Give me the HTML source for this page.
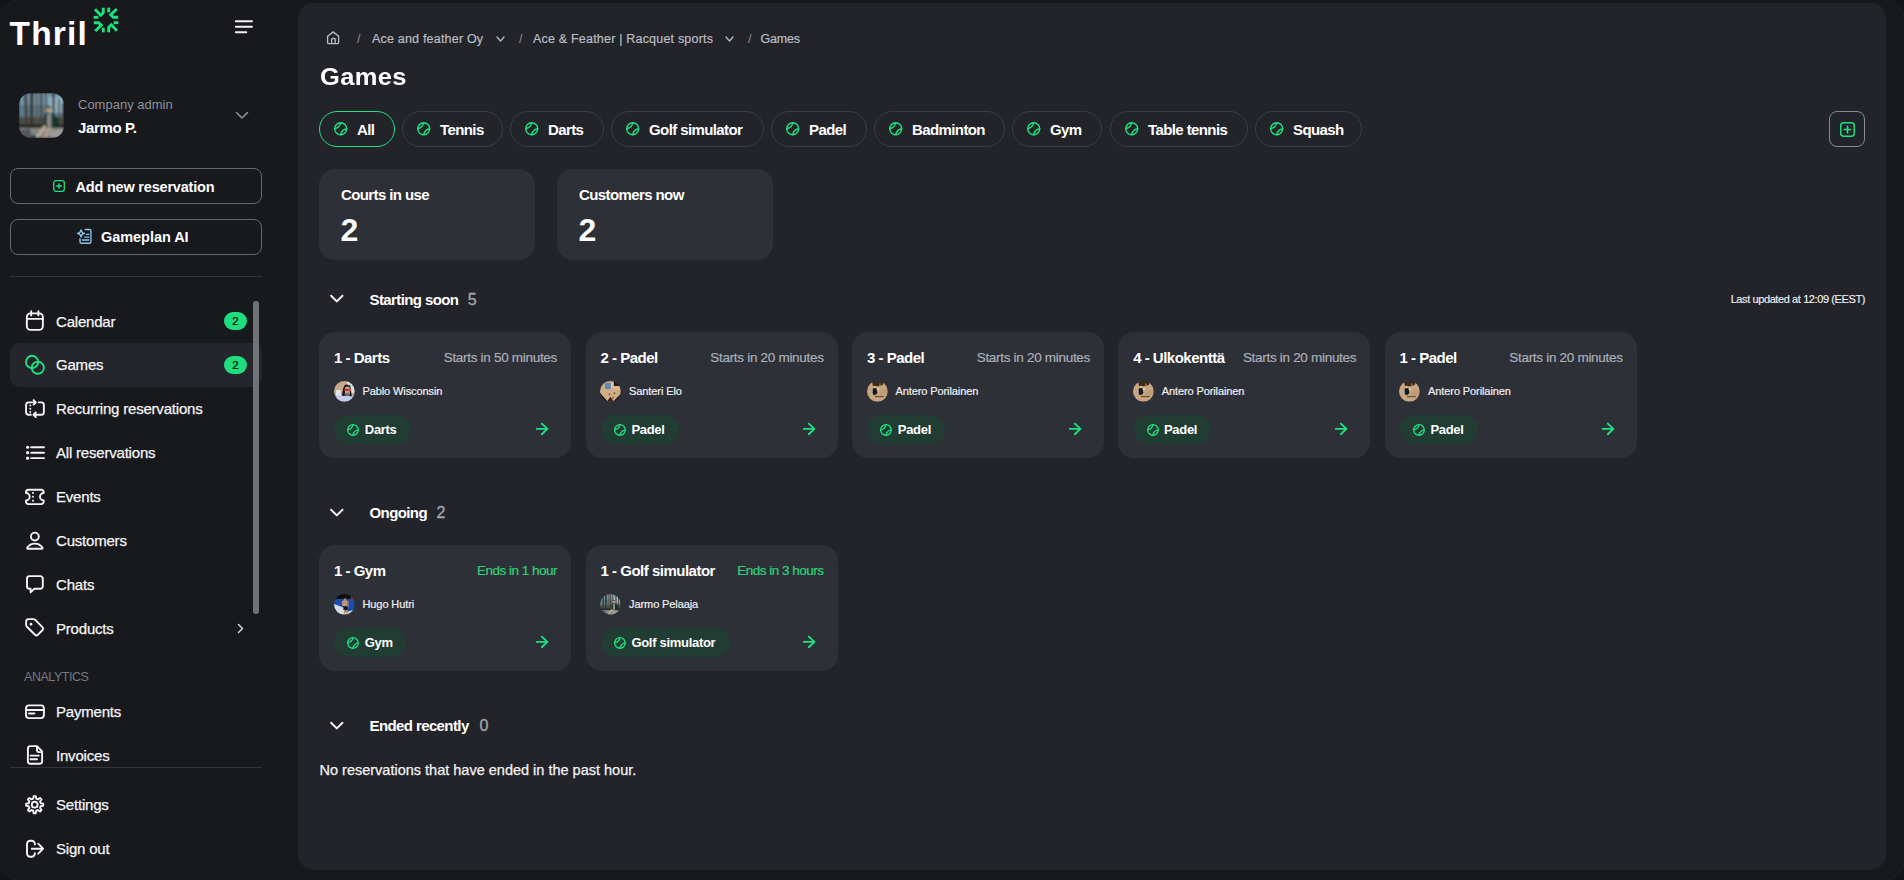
<!DOCTYPE html>
<html><head><meta charset="utf-8">
<style>
*{box-sizing:border-box;margin:0;padding:0}
html,body{width:1904px;height:880px;overflow:hidden;background:#18191d;font-family:"Liberation Sans",sans-serif;color:#fff}
.a{position:absolute}
.t{position:absolute;line-height:1;white-space:nowrap}
svg{position:absolute;overflow:visible}
.nav{font-size:15px;color:#f4f4f5;letter-spacing:-0.2px;-webkit-text-stroke:0.25px #f4f4f5}
.ic{fill:none;stroke:#f2f2f3;stroke-width:1.6;stroke-linecap:round;stroke-linejoin:round}
.g{stroke:#1de27f}
#main{position:absolute;left:298px;top:3px;width:1588px;height:867px;border-radius:16px;background:#232429}
.chip{position:absolute;top:111px;height:36px;border:1px solid #3b3d43;border-radius:18px}
.chip span{position:absolute;left:0;top:0;line-height:1;font-size:15px;font-weight:bold;white-space:nowrap}
.stat{position:absolute;top:169px;width:216px;height:91px;border-radius:16px;background:#2d2f36}
.card{position:absolute;width:252px;height:126px;border-radius:16px;background:#2d2f36}
.tag{position:absolute;left:15px;top:83px;height:29px;border-radius:15px;background:#1d3a2b}
</style></head><body>

<!-- logo -->
<div class="t" style="left:9.5px;top:17.3px;font-size:33.5px;font-weight:bold;letter-spacing:1.2px">Thril</div>
<svg style="left:89.8px;top:4.45px" width="32" height="32" viewBox="0 0 32 32">
 <g fill="none" stroke="#1de27f" stroke-width="2.9" stroke-linejoin="miter">
  <g id="lq"><path d="M5 5.2 L10.73 11.22 L13.27 8.68 L13.27 3.82"/><path d="M18.73 3.64 L18.73 8.36"/></g>
  <use href="#lq" transform="rotate(90 16 16)"/>
  <use href="#lq" transform="rotate(180 16 16)"/>
  <use href="#lq" transform="rotate(270 16 16)"/>
 </g>
</svg>
<!-- hamburger -->
<svg style="left:234px;top:19px" width="20" height="16" viewBox="0 0 20 16">
 <g stroke="#f2f2f3" stroke-width="1.9" stroke-linecap="round"><path d="M1.8 2.3H18M1.8 7.8H18M1.8 13.3H12.3"/></g>
</svg>

<!-- user -->
<svg style="left:19px;top:92.8px" width="45" height="45" viewBox="0 0 45 45"><defs><clipPath id="cp1"><rect width="45" height="45" rx="12"/></clipPath><filter id="bl1" x="-10%" y="-10%" width="120%" height="120%"><feGaussianBlur stdDeviation="0.8"/></filter></defs><g clip-path="url(#cp1)"><g filter="url(#bl1)"><rect width="45" height="45" fill="#587d8e"/>
<rect x="0" y="0" width="45" height="12" fill="#6d95a8"/><rect x="30" y="4" width="15" height="16" fill="#8fb4c6"/>
<rect x="0" y="24" width="45" height="9" fill="#46504c"/>
<path d="M5 0 H8 L9 33 H6Z" fill="#4a3d34"/><path d="M11 0 H14.5 L14 33 H11Z" fill="#3d322b"/><rect x="17" y="0" width="1.5" height="30" fill="#5b4c42"/>
<rect x="21" y="0" width="2.2" height="30" fill="#463a32"/><rect x="26" y="0" width="1.5" height="26" fill="#5d4e44"/>
<path d="M33 0 H35.5 L36 30 H34Z" fill="#473a31"/><rect x="39" y="6" width="1.8" height="26" fill="#52443a"/><rect x="43" y="10" width="2" height="22" fill="#4a3d34"/>
<rect x="0" y="31" width="45" height="4" fill="#2c2b26"/>
<path d="M0 35 H45 V45 H0Z" fill="#858684"/><path d="M0 37 L11 35.5 L13 45 H0Z" fill="#50585a"/><path d="M30 38 L45 36 V45 H32Z" fill="#9a9b98"/>
<circle cx="29.5" cy="16.5" r="2.6" fill="#b99a7d"/><rect x="27" y="13.2" width="5" height="2" fill="#5e4436"/>
<path d="M25 21 L33 20 L40 26 L39 34 L26 34Z" fill="#17302c"/>
<rect x="28" y="21" width="4.5" height="12" fill="#878988"/>
<path d="M25 32 L16 44 L19 45 L28 34Z" fill="#bba794"/><path d="M30 33 L24 45 L27 45 L33 34Z" fill="#b39f8b"/>
<rect x="12" y="42" width="5" height="3" fill="#2b4a60"/></g></g></svg>
<div class="t" style="left:78px;top:98px;font-size:13px;color:#8b9099">Company admin</div>
<div class="t" style="left:78px;top:120.3px;font-size:15px;font-weight:bold;letter-spacing:-0.35px">Jarmo P.</div>
<svg style="left:234.7px;top:110.7px" width="14" height="9" viewBox="0 0 14 9"><path d="M1.5 1.5L7 7L12.5 1.5" fill="none" stroke="#8b9099" stroke-width="1.6" stroke-linecap="round" stroke-linejoin="round"/></svg>

<!-- buttons -->
<div class="a" style="left:10px;top:168px;width:252px;height:36px;border:1px solid #64676e;border-radius:8px"></div>
<svg style="left:53px;top:180px" width="12" height="12" viewBox="0 0 12 12"><rect x="0.7" y="0.7" width="10.6" height="10.6" rx="2.2" fill="none" stroke="#1de27f" stroke-width="1.3"/><path d="M6 3.6V8.4M3.6 6H8.4" stroke="#1de27f" stroke-width="1.3" stroke-linecap="round"/></svg>
<div class="t" style="left:75.5px;top:179.8px;font-size:14.5px;font-weight:bold;letter-spacing:-0.2px">Add new reservation</div>

<div class="a" style="left:10px;top:219px;width:252px;height:36px;border:1px solid #64676e;border-radius:8px"></div>
<svg style="left:77px;top:228px" width="16" height="17" viewBox="0 0 16 17"><g fill="none" stroke="#8cc4ea" stroke-width="1.35" stroke-linecap="round" stroke-linejoin="round"><path d="M8.3 1.5H12.4A1.5 1.5 0 0 1 13.9 3V13.7A1.5 1.5 0 0 1 12.4 15.2H4.5A1.5 1.5 0 0 1 3 13.7V10.6"/><path d="M9.6 6.3H11.8M7.8 9.1H11.8M5.2 12H11.8"/><path d="M4 1.9Q4.4 5 7.5 5.45Q4.4 5.9 4 9Q3.6 5.9 0.5 5.45Q3.6 5 4 1.9Z"/></g></svg>
<div class="t" style="left:101px;top:229.8px;font-size:14.5px;font-weight:bold;letter-spacing:-0.05px">Gameplan AI</div>

<div class="a" style="left:10px;top:276px;width:252px;height:1px;background:#34363c"></div>

<!-- nav -->
<div class="a" style="left:10px;top:343px;width:252px;height:44px;border-radius:10px;background:#25262b"></div>
<div class="a" style="left:253.2px;top:301px;width:5.6px;height:313px;border-radius:3px;background:rgba(128,130,134,0.85)"></div>

<div class="t nav" style="left:56px;top:314px">Calendar</div>
<div class="t nav" style="left:56px;top:357.4px">Games</div>
<div class="t nav" style="left:56px;top:401px">Recurring reservations</div>
<div class="t nav" style="left:56px;top:445px">All reservations</div>
<div class="t nav" style="left:56px;top:488.7px">Events</div>
<div class="t nav" style="left:56px;top:533.1px">Customers</div>
<div class="t nav" style="left:56px;top:577.3px">Chats</div>
<div class="t nav" style="left:56px;top:620.9px">Products</div>
<div class="t" style="left:24px;top:670.9px;font-size:12.5px;color:#737a88;letter-spacing:-0.45px">ANALYTICS</div>
<div class="t nav" style="left:56px;top:703.6px">Payments</div>
<div class="t nav" style="left:56px;top:747.9px">Invoices</div>
<div class="a" style="left:10px;top:767px;width:252px;height:1px;background:#34363c"></div>
<div class="t nav" style="left:56px;top:797.4px">Settings</div>
<div class="t nav" style="left:56px;top:841.1px">Sign out</div>

<div class="a" style="left:224px;top:312px;width:23px;height:18px;border-radius:9px;background:#1ddd7e;color:#000;font-size:11.5px;line-height:18.5px;text-align:center;-webkit-text-stroke:0.2px #000">2</div>
<div class="a" style="left:224px;top:356px;width:23px;height:18px;border-radius:9px;background:#1ddd7e;color:#000;font-size:11.5px;line-height:18.5px;text-align:center;-webkit-text-stroke:0.2px #000">2</div>

<svg style="left:0;top:0" width="300" height="880" viewBox="0 0 300 880">
<g fill="none" stroke="#f4f4f5" stroke-width="1.9" stroke-linecap="round" stroke-linejoin="round">
 <rect x="26.85" y="313.4" width="16" height="16.5" rx="3.7"/><path d="M26.85 318.9H42.85M31.2 311.2V315.4M38.4 311.2V315.4"/>
 <g stroke="#1de27f"><circle cx="32.05" cy="361.9" r="6.1"/><circle cx="37.8" cy="367.7" r="6.1"/></g>
 <path d="M30.9 414.76H28.6A2.5 2.5 0 0 1 26.1 412.26V404.85A2.5 2.5 0 0 1 28.6 402.35H35.8M33.6 400.1L35.9 402.35L33.6 404.6"/>
 <path d="M38.8 402.35H41.36A2.5 2.5 0 0 1 43.86 404.85V412.26A2.5 2.5 0 0 1 41.36 414.76H33.8M35.8 412.5L33.5 414.76L35.8 417"/>
 <path d="M31.16 447.24H44M31.16 452.7H44M31.16 458.17H44"/>
 <path d="M28.5 489.76H41.2A2.5 2.5 0 0 1 43.7 492.26V493A3.7 3.7 0 0 0 43.7 500.4V501.6A2.5 2.5 0 0 1 41.2 504.1H28.5A2.5 2.5 0 0 1 26 501.6V500.4A3.7 3.7 0 0 0 26 493V492.26A2.5 2.5 0 0 1 28.5 489.76Z"/>
 <circle cx="34.85" cy="536.6" r="3.95"/>
 <path d="M27.9 548.7H41.8Q42.9 548.7 42.4 547.6Q39.8 543.65 34.85 543.65Q29.9 543.65 27.3 547.6Q26.8 548.7 27.9 548.7Z"/>
 <path d="M29.5 576.1H40.3A2.5 2.5 0 0 1 42.8 578.6V586.3A2.5 2.5 0 0 1 40.3 588.8H34.4L30.6 592.3V588.8H29.5A2.5 2.5 0 0 1 27 586.3V578.6A2.5 2.5 0 0 1 29.5 576.1Z"/>
 <path d="M26.14 621.6A2.5 2.5 0 0 1 28.64 619.14H33.6Q34.4 619.14 35 619.7L42.6 627.3A2 2 0 0 1 42.6 630L37.8 634.8A2 2 0 0 1 35 634.8L26.7 626.5Q26.14 625.9 26.14 625.1Z"/>
 <path d="M238.5 624.5L242.5 628.5L238.5 632.5" stroke="#d8d9dc" stroke-width="1.5"/>
 <rect x="26" y="705.4" width="17.9" height="12.7" rx="3"/><path d="M26 710H43.9M28.94 713.5H34.4"/>
 <path d="M30.4 746.14H37L42.1 751.3V761.2A2.5 2.5 0 0 1 39.6 763.7H30.4A2.5 2.5 0 0 1 27.9 761.2V748.64A2.5 2.5 0 0 1 30.4 746.14Z"/><path d="M37 746.6V750.6A1.5 1.5 0 0 0 38.5 752.1H41.8M30.57 755.6H38.8M30.57 759.3H37"/>
 <path d="M33.21 798.68 L33.62 796.17 L35.78 796.17 L36.19 798.68 L37.90 799.39 L39.97 797.90 L41.50 799.43 L40.01 801.50 L40.72 803.21 L43.23 803.62 L43.23 805.78 L40.72 806.19 L40.01 807.90 L41.50 809.97 L39.97 811.50 L37.90 810.01 L36.19 810.72 L35.78 813.23 L33.62 813.23 L33.21 810.72 L31.50 810.01 L29.43 811.50 L27.90 809.97 L29.39 807.90 L28.68 806.19 L26.17 805.78 L26.17 803.62 L28.68 803.21 L29.39 801.50 L27.90 799.43 L29.43 797.90 L31.50 799.39Z"/><circle cx="34.7" cy="804.7" r="2.9"/>
 <path d="M34.85 844.4V843.9A3.2 3.2 0 0 0 31.65 840.7H30.2A3.2 3.2 0 0 0 27 843.9V853.5A3.2 3.2 0 0 0 30.2 856.7H31.65A3.2 3.2 0 0 0 34.85 853.5V853.1M31.75 848.7H43M38.25 843.7L43.1 848.7L38.25 853.7"/>
</g>
<g fill="#f4f4f5"><circle cx="30.3" cy="405.5" r="0.95"/><circle cx="30.3" cy="408.8" r="0.95"/><circle cx="30.3" cy="412" r="0.95"/>
<circle cx="27.6" cy="447.24" r="1.6"/><circle cx="27.6" cy="452.7" r="1.6"/><circle cx="27.6" cy="458.17" r="1.6"/>
<rect x="32.1" y="492" width="1.7" height="1.8"/><rect x="32.1" y="495.8" width="1.7" height="1.8"/><rect x="32.1" y="499.8" width="1.7" height="1.8"/>
<circle cx="31" cy="624.16" r="1.3"/></g>
</svg>
<!-- MAIN -->
<div id="main"></div>
<svg style="left:326px;top:31px" width="14" height="14" viewBox="0 0 14 14"><g fill="none" stroke="#b9bdc5" stroke-width="1.35" stroke-linejoin="round"><path d="M1.6 5.2L7.25 0.9L12.6 5.2V11.6A1 1 0 0 1 11.6 12.6H2.6A1 1 0 0 1 1.6 11.6Z"/><path d="M5.6 12.6V8.4A0.9 0.9 0 0 1 6.5 7.5H8.35A0.9 0.9 0 0 1 9.25 8.4V12.6"/></g></svg>
<div class="t" style="left:357px;top:33.22px;font-size:12.5px;color:#8d9199">/</div>
<div class="t" style="left:372px;top:33.22px;font-size:12.5px;color:#b9bdc5;letter-spacing:0.2px;-webkit-text-stroke:0.2px #b9bdc5">Ace and feather Oy</div>
<svg style="left:496px;top:35.5px" width="9" height="6" viewBox="0 0 9 6"><path d="M1 1L4.5 5L8 1" fill="none" stroke="#b4b8bf" stroke-width="1.4" stroke-linecap="round" stroke-linejoin="round"/></svg>
<div class="t" style="left:519px;top:33.22px;font-size:12.5px;color:#8d9199">/</div>
<div class="t" style="left:533px;top:33.22px;font-size:12.5px;color:#b9bdc5;letter-spacing:0.2px;-webkit-text-stroke:0.2px #b9bdc5">Ace &amp; Feather | Racquet sports</div>
<svg style="left:724.5px;top:35.5px" width="9" height="6" viewBox="0 0 9 6"><path d="M1 1L4.5 5L8 1" fill="none" stroke="#b4b8bf" stroke-width="1.4" stroke-linecap="round" stroke-linejoin="round"/></svg>
<div class="t" style="left:748px;top:33.22px;font-size:12.5px;color:#8d9199">/</div>
<div class="t" style="left:760.5px;top:33.22px;font-size:12.5px;color:#b9bdc5;letter-spacing:0.2px;-webkit-text-stroke:0.2px #b9bdc5;letter-spacing:-0.2px">Games</div>
<div class="t" style="left:319.5px;top:66.11px;font-size:23.5px;font-weight:bold;letter-spacing:0.3px;transform:scaleX(1.085);transform-origin:0 0">Games</div>
<div class="a" style="left:319px;top:111px;width:76px;height:36px;border:1.5px solid #1de27f;border-radius:18px"></div>
<svg style="left:332.90px;top:121.45px" width="15.40" height="15.40" viewBox="0 0 15.40 15.40"><g fill="none" stroke="#1de27f" stroke-width="1.4" stroke-linecap="round"><circle cx="7.70" cy="7.70" r="6.0"/><path d="M7.70 1.70A7.50 7.50 0 0 1 1.70 7.70"/><path d="M13.70 7.70A7.50 7.50 0 0 0 7.70 13.70"/></g></svg>
<div class="t" style="left:357px;top:121.80px;font-size:15px;font-weight:bold;letter-spacing:-0.6px">All</div>
<div class="a" style="left:402px;top:111px;width:101px;height:36px;border:1px solid #3a3d45;border-radius:18px"></div>
<svg style="left:415.90px;top:121.45px" width="15.40" height="15.40" viewBox="0 0 15.40 15.40"><g fill="none" stroke="#1de27f" stroke-width="1.4" stroke-linecap="round"><circle cx="7.70" cy="7.70" r="6.0"/><path d="M7.70 1.70A7.50 7.50 0 0 1 1.70 7.70"/><path d="M13.70 7.70A7.50 7.50 0 0 0 7.70 13.70"/></g></svg>
<div class="t" style="left:440px;top:121.80px;font-size:15px;font-weight:bold;letter-spacing:-0.6px">Tennis</div>
<div class="a" style="left:510px;top:111px;width:94px;height:36px;border:1px solid #3a3d45;border-radius:18px"></div>
<svg style="left:523.90px;top:121.45px" width="15.40" height="15.40" viewBox="0 0 15.40 15.40"><g fill="none" stroke="#1de27f" stroke-width="1.4" stroke-linecap="round"><circle cx="7.70" cy="7.70" r="6.0"/><path d="M7.70 1.70A7.50 7.50 0 0 1 1.70 7.70"/><path d="M13.70 7.70A7.50 7.50 0 0 0 7.70 13.70"/></g></svg>
<div class="t" style="left:548px;top:121.80px;font-size:15px;font-weight:bold;letter-spacing:-0.6px">Darts</div>
<div class="a" style="left:611px;top:111px;width:153px;height:36px;border:1px solid #3a3d45;border-radius:18px"></div>
<svg style="left:624.90px;top:121.45px" width="15.40" height="15.40" viewBox="0 0 15.40 15.40"><g fill="none" stroke="#1de27f" stroke-width="1.4" stroke-linecap="round"><circle cx="7.70" cy="7.70" r="6.0"/><path d="M7.70 1.70A7.50 7.50 0 0 1 1.70 7.70"/><path d="M13.70 7.70A7.50 7.50 0 0 0 7.70 13.70"/></g></svg>
<div class="t" style="left:649px;top:121.80px;font-size:15px;font-weight:bold;letter-spacing:-0.6px">Golf simulator</div>
<div class="a" style="left:771px;top:111px;width:96px;height:36px;border:1px solid #3a3d45;border-radius:18px"></div>
<svg style="left:784.90px;top:121.45px" width="15.40" height="15.40" viewBox="0 0 15.40 15.40"><g fill="none" stroke="#1de27f" stroke-width="1.4" stroke-linecap="round"><circle cx="7.70" cy="7.70" r="6.0"/><path d="M7.70 1.70A7.50 7.50 0 0 1 1.70 7.70"/><path d="M13.70 7.70A7.50 7.50 0 0 0 7.70 13.70"/></g></svg>
<div class="t" style="left:809px;top:121.80px;font-size:15px;font-weight:bold;letter-spacing:-0.6px">Padel</div>
<div class="a" style="left:874px;top:111px;width:131px;height:36px;border:1px solid #3a3d45;border-radius:18px"></div>
<svg style="left:887.90px;top:121.45px" width="15.40" height="15.40" viewBox="0 0 15.40 15.40"><g fill="none" stroke="#1de27f" stroke-width="1.4" stroke-linecap="round"><circle cx="7.70" cy="7.70" r="6.0"/><path d="M7.70 1.70A7.50 7.50 0 0 1 1.70 7.70"/><path d="M13.70 7.70A7.50 7.50 0 0 0 7.70 13.70"/></g></svg>
<div class="t" style="left:912px;top:121.80px;font-size:15px;font-weight:bold;letter-spacing:-0.6px">Badminton</div>
<div class="a" style="left:1012px;top:111px;width:90px;height:36px;border:1px solid #3a3d45;border-radius:18px"></div>
<svg style="left:1025.90px;top:121.45px" width="15.40" height="15.40" viewBox="0 0 15.40 15.40"><g fill="none" stroke="#1de27f" stroke-width="1.4" stroke-linecap="round"><circle cx="7.70" cy="7.70" r="6.0"/><path d="M7.70 1.70A7.50 7.50 0 0 1 1.70 7.70"/><path d="M13.70 7.70A7.50 7.50 0 0 0 7.70 13.70"/></g></svg>
<div class="t" style="left:1050px;top:121.80px;font-size:15px;font-weight:bold;letter-spacing:-0.6px">Gym</div>
<div class="a" style="left:1110px;top:111px;width:138px;height:36px;border:1px solid #3a3d45;border-radius:18px"></div>
<svg style="left:1123.90px;top:121.45px" width="15.40" height="15.40" viewBox="0 0 15.40 15.40"><g fill="none" stroke="#1de27f" stroke-width="1.4" stroke-linecap="round"><circle cx="7.70" cy="7.70" r="6.0"/><path d="M7.70 1.70A7.50 7.50 0 0 1 1.70 7.70"/><path d="M13.70 7.70A7.50 7.50 0 0 0 7.70 13.70"/></g></svg>
<div class="t" style="left:1148px;top:121.80px;font-size:15px;font-weight:bold;letter-spacing:-0.6px">Table tennis</div>
<div class="a" style="left:1255px;top:111px;width:107px;height:36px;border:1px solid #3a3d45;border-radius:18px"></div>
<svg style="left:1268.90px;top:121.45px" width="15.40" height="15.40" viewBox="0 0 15.40 15.40"><g fill="none" stroke="#1de27f" stroke-width="1.4" stroke-linecap="round"><circle cx="7.70" cy="7.70" r="6.0"/><path d="M7.70 1.70A7.50 7.50 0 0 1 1.70 7.70"/><path d="M13.70 7.70A7.50 7.50 0 0 0 7.70 13.70"/></g></svg>
<div class="t" style="left:1293px;top:121.80px;font-size:15px;font-weight:bold;letter-spacing:-0.6px">Squash</div>
<div class="a" style="left:1829px;top:111px;width:36px;height:36px;border:1px solid #858a93;border-radius:8px"></div>
<svg style="left:1839.5px;top:121.5px" width="15" height="15" viewBox="0 0 15 15"><rect x="0.75" y="0.75" width="13.5" height="13.5" rx="3" fill="none" stroke="#1de27f" stroke-width="1.45"/><path d="M7.5 4.3V10.7M4.3 7.5H10.7" stroke="#1de27f" stroke-width="1.7" stroke-linecap="round"/></svg>
<div class="a" style="left:319px;top:169px;width:216px;height:91px;border-radius:16px;background:#2e3038"></div>
<div class="t" style="left:341px;top:186.90px;font-size:15px;font-weight:bold;letter-spacing:-0.6px">Courts in use</div>
<div class="t" style="left:340.5px;top:213.91px;font-size:32px;font-weight:bold">2</div>
<div class="a" style="left:557px;top:169px;width:216px;height:91px;border-radius:16px;background:#2e3038"></div>
<div class="t" style="left:579px;top:186.90px;font-size:15px;font-weight:bold;letter-spacing:-0.6px">Customers now</div>
<div class="t" style="left:578.5px;top:213.91px;font-size:32px;font-weight:bold">2</div>
<svg style="left:325px;top:288px" width="24" height="16" viewBox="0 0 24 16"><path d="M6.1 7.7L11.8 13.4L17.5 7.7" fill="none" stroke="#f2f2f3" stroke-width="2" stroke-linecap="round" stroke-linejoin="round"/></svg>
<div class="t" style="left:369.5px;top:291.80px;font-size:15px;font-weight:bold;letter-spacing:-0.6px">Starting soon</div>
<div class="t" style="left:467.8px;top:291.86px;font-size:16px;color:#a3a7ae;-webkit-text-stroke:0.3px #a3a7ae">5</div>
<div class="t" style="right:39px;top:293.69px;font-size:11px;letter-spacing:-0.4px;color:#f0f0f2;-webkit-text-stroke:0.15px #f0f0f2">Last updated at 12:09 (EEST)</div>
<svg style="left:325px;top:501.5px" width="24" height="16" viewBox="0 0 24 16"><path d="M6.1 7.7L11.8 13.4L17.5 7.7" fill="none" stroke="#f2f2f3" stroke-width="2" stroke-linecap="round" stroke-linejoin="round"/></svg>
<div class="t" style="left:369.5px;top:505.00px;font-size:15px;font-weight:bold;letter-spacing:-0.6px">Ongoing</div>
<div class="t" style="left:436.6px;top:505.06px;font-size:16px;color:#a3a7ae;-webkit-text-stroke:0.3px #a3a7ae">2</div>
<svg style="left:325px;top:715.3px" width="24" height="16" viewBox="0 0 24 16"><path d="M6.1 7.7L11.8 13.4L17.5 7.7" fill="none" stroke="#f2f2f3" stroke-width="2" stroke-linecap="round" stroke-linejoin="round"/></svg>
<div class="t" style="left:369.5px;top:717.80px;font-size:15px;font-weight:bold;letter-spacing:-0.6px">Ended recently</div>
<div class="t" style="left:479.6px;top:717.86px;font-size:16px;color:#a3a7ae;-webkit-text-stroke:0.3px #a3a7ae">0</div>
<div class="t" style="left:319.5px;top:762.73px;font-size:14.5px;color:#f2f2f3;-webkit-text-stroke:0.25px #f2f2f3">No reservations that have ended in the past hour.</div>
<div class="a" style="left:319px;top:332px;width:252px;height:126px;border-radius:16px;background:#2e3038"></div>
<div class="t" style="left:334px;top:349.60px;font-size:15px;font-weight:bold;letter-spacing:-0.5px">1 - Darts</div>
<div class="t" style="right:1347px;top:351.37px;font-size:13.5px;color:#a9aeb7;-webkit-text-stroke:0.2px #a9aeb7;letter-spacing:-0.3px">Starts in 50 minutes</div>
<svg style="left:333.6px;top:380.8px" width="20.8" height="20.8" viewBox="0 0 21 21"><defs><clipPath id="cp2"><circle cx="10.5" cy="10.5" r="10.5"/></clipPath><filter id="bl2" x="-10%" y="-10%" width="120%" height="120%"><feGaussianBlur stdDeviation="0.5"/></filter></defs><g clip-path="url(#cp2)"><g filter="url(#bl2)"><rect width="21" height="21" fill="#c9a887"/>
<rect x="13" y="0" width="8" height="12" fill="#d9e2e2"/><rect x="15.5" y="4" width="1" height="7" fill="#2b3440"/>
<rect x="2" y="9" width="5" height="6" fill="#dfe3ea"/>
<path d="M8 16 Q9 4 12 3.5 Q16 3 17 8 L18 16Z" fill="#161616"/>
<rect x="11" y="5.5" width="5" height="9" rx="2" fill="#c9a48c"/>
<rect x="10.5" y="8" width="6.5" height="2" fill="#c42a35"/><rect x="16" y="8.5" width="2" height="1.5" fill="#f0a030"/>
<rect x="11.5" y="12" width="4" height="3" fill="#6d6d6a"/>
<path d="M0 21 L2 16 Q10 14 20 16 L21 21Z" fill="#c3cdee"/></g></g></svg>
<div class="t" style="left:362.5px;top:385.89px;font-size:11px;color:#eeeef0;letter-spacing:-0.1px;-webkit-text-stroke:0.2px #eeeef0">Pablo Wisconsin</div>
<div class="a" style="left:334px;top:415.3px;width:77px;height:28.5px;border-radius:14.5px;background:#213c33"></div>
<svg style="left:346.30px;top:422.90px" width="13.90" height="13.90" viewBox="0 0 13.90 13.90"><g fill="none" stroke="#1de27f" stroke-width="1.3" stroke-linecap="round"><circle cx="6.95" cy="6.95" r="5.3"/><path d="M6.95 1.65A6.62 6.62 0 0 1 1.65 6.95"/><path d="M12.25 6.95A6.62 6.62 0 0 0 6.95 12.25"/></g></svg>
<div class="t" style="left:364.8px;top:423.20px;font-size:13px;font-weight:bold;letter-spacing:-0.3px">Darts</div>
<svg style="left:533px;top:420px" width="20" height="18" viewBox="0 0 20 18"><g fill="none" stroke="#1de27f" stroke-width="1.9" stroke-linecap="round" stroke-linejoin="round"><path d="M3.8 8.9H14.4M8.8 3.6L14.4 8.9L8.8 14.2"/></g></svg>
<div class="a" style="left:585.6px;top:332px;width:252px;height:126px;border-radius:16px;background:#2e3038"></div>
<div class="t" style="left:600.6px;top:349.60px;font-size:15px;font-weight:bold;letter-spacing:-0.5px">2 - Padel</div>
<div class="t" style="right:1080.4px;top:351.37px;font-size:13.5px;color:#a9aeb7;-webkit-text-stroke:0.2px #a9aeb7;letter-spacing:-0.3px">Starts in 20 minutes</div>
<svg style="left:600.2px;top:380.8px" width="20.8" height="20.8" viewBox="0 0 21 21"><defs><clipPath id="cp3"><circle cx="10.5" cy="10.5" r="10.5"/></clipPath><filter id="bl3" x="-10%" y="-10%" width="120%" height="120%"><feGaussianBlur stdDeviation="0.5"/></filter></defs><g clip-path="url(#cp3)"><g filter="url(#bl3)"><rect width="21" height="21" fill="#cfae86"/>
<rect x="5" y="2" width="6" height="6" fill="#5a86b8"/><rect x="11" y="2" width="3" height="5" fill="#e2c49c"/>
<rect x="14" y="0" width="8" height="5" fill="#151210"/><rect x="14" y="5" width="7" height="4" fill="#d9b58a"/>
<path d="M0 12 L8 21 H0Z" fill="#120f0d"/><path d="M21 9 V21 H13 L21 13Z" fill="#17120f"/>
<path d="M7 21 L10.5 16 L14 21Z" fill="#3a1d18"/>
<circle cx="9.5" cy="13.5" r="1" fill="#6b5a46"/><circle cx="14.5" cy="12.3" r="1" fill="#6b5a46"/>
<rect x="12" y="16" width="2" height="2" fill="#b05a30"/></g></g></svg>
<div class="t" style="left:629.1px;top:385.89px;font-size:11px;color:#eeeef0;letter-spacing:-0.1px;-webkit-text-stroke:0.2px #eeeef0">Santeri Elo</div>
<div class="a" style="left:600.6px;top:415.3px;width:78px;height:28.5px;border-radius:14.5px;background:#213c33"></div>
<svg style="left:612.90px;top:422.90px" width="13.90" height="13.90" viewBox="0 0 13.90 13.90"><g fill="none" stroke="#1de27f" stroke-width="1.3" stroke-linecap="round"><circle cx="6.95" cy="6.95" r="5.3"/><path d="M6.95 1.65A6.62 6.62 0 0 1 1.65 6.95"/><path d="M12.25 6.95A6.62 6.62 0 0 0 6.95 12.25"/></g></svg>
<div class="t" style="left:631.4px;top:423.20px;font-size:13px;font-weight:bold;letter-spacing:-0.3px">Padel</div>
<svg style="left:799.6px;top:420px" width="20" height="18" viewBox="0 0 20 18"><g fill="none" stroke="#1de27f" stroke-width="1.9" stroke-linecap="round" stroke-linejoin="round"><path d="M3.8 8.9H14.4M8.8 3.6L14.4 8.9L8.8 14.2"/></g></svg>
<div class="a" style="left:852px;top:332px;width:252px;height:126px;border-radius:16px;background:#2e3038"></div>
<div class="t" style="left:867px;top:349.60px;font-size:15px;font-weight:bold;letter-spacing:-0.5px">3 - Padel</div>
<div class="t" style="right:814px;top:351.37px;font-size:13.5px;color:#a9aeb7;-webkit-text-stroke:0.2px #a9aeb7;letter-spacing:-0.3px">Starts in 20 minutes</div>
<svg style="left:866.6px;top:380.8px" width="20.8" height="20.8" viewBox="0 0 21 21"><defs><clipPath id="cp4"><circle cx="10.5" cy="10.5" r="10.5"/></clipPath><filter id="bl4" x="-10%" y="-10%" width="120%" height="120%"><feGaussianBlur stdDeviation="0.5"/></filter></defs><g clip-path="url(#cp4)"><g filter="url(#bl4)"><rect width="21" height="21" fill="#c9a680"/>
<path d="M5 0 H17 L16 4 Q11 6 6 5Z" fill="#3a2c1e"/><rect x="12.5" y="2.5" width="1.2" height="3" fill="#b08a50"/>
<path d="M5.5 8 Q7 6.5 9.5 7.2 L10.5 12 Q9 14.5 6.5 14 L5 11Z" fill="#151515"/><path d="M5 8.5 L6 8 L6.2 13 L5.2 12Z" fill="#7d8fa0"/>
<circle cx="8" cy="6" r="1.2" fill="#e3b380"/><rect x="10.5" y="7.2" width="1.3" height="1.8" fill="#e6e6e6"/>
<rect x="8" y="15" width="9" height="1.4" fill="#5d5a4a"/><rect x="13" y="9" width="7" height="5" fill="#bf9b76"/></g></g></svg>
<div class="t" style="left:895.5px;top:385.89px;font-size:11px;color:#eeeef0;letter-spacing:-0.1px;-webkit-text-stroke:0.2px #eeeef0">Antero Porilainen</div>
<div class="a" style="left:867px;top:415.3px;width:78px;height:28.5px;border-radius:14.5px;background:#213c33"></div>
<svg style="left:879.30px;top:422.90px" width="13.90" height="13.90" viewBox="0 0 13.90 13.90"><g fill="none" stroke="#1de27f" stroke-width="1.3" stroke-linecap="round"><circle cx="6.95" cy="6.95" r="5.3"/><path d="M6.95 1.65A6.62 6.62 0 0 1 1.65 6.95"/><path d="M12.25 6.95A6.62 6.62 0 0 0 6.95 12.25"/></g></svg>
<div class="t" style="left:897.8px;top:423.20px;font-size:13px;font-weight:bold;letter-spacing:-0.3px">Padel</div>
<svg style="left:1066px;top:420px" width="20" height="18" viewBox="0 0 20 18"><g fill="none" stroke="#1de27f" stroke-width="1.9" stroke-linecap="round" stroke-linejoin="round"><path d="M3.8 8.9H14.4M8.8 3.6L14.4 8.9L8.8 14.2"/></g></svg>
<div class="a" style="left:1118.2px;top:332px;width:252px;height:126px;border-radius:16px;background:#2e3038"></div>
<div class="t" style="left:1133.2px;top:349.60px;font-size:15px;font-weight:bold;letter-spacing:-0.5px">4 - Ulkokentt&auml;</div>
<div class="t" style="right:547.8px;top:351.37px;font-size:13.5px;color:#a9aeb7;-webkit-text-stroke:0.2px #a9aeb7;letter-spacing:-0.3px">Starts in 20 minutes</div>
<svg style="left:1132.8px;top:380.8px" width="20.8" height="20.8" viewBox="0 0 21 21"><defs><clipPath id="cp5"><circle cx="10.5" cy="10.5" r="10.5"/></clipPath><filter id="bl5" x="-10%" y="-10%" width="120%" height="120%"><feGaussianBlur stdDeviation="0.5"/></filter></defs><g clip-path="url(#cp5)"><g filter="url(#bl5)"><rect width="21" height="21" fill="#c9a680"/>
<path d="M5 0 H17 L16 4 Q11 6 6 5Z" fill="#3a2c1e"/><rect x="12.5" y="2.5" width="1.2" height="3" fill="#b08a50"/>
<path d="M5.5 8 Q7 6.5 9.5 7.2 L10.5 12 Q9 14.5 6.5 14 L5 11Z" fill="#151515"/><path d="M5 8.5 L6 8 L6.2 13 L5.2 12Z" fill="#7d8fa0"/>
<circle cx="8" cy="6" r="1.2" fill="#e3b380"/><rect x="10.5" y="7.2" width="1.3" height="1.8" fill="#e6e6e6"/>
<rect x="8" y="15" width="9" height="1.4" fill="#5d5a4a"/><rect x="13" y="9" width="7" height="5" fill="#bf9b76"/></g></g></svg>
<div class="t" style="left:1161.7px;top:385.89px;font-size:11px;color:#eeeef0;letter-spacing:-0.1px;-webkit-text-stroke:0.2px #eeeef0">Antero Porilainen</div>
<div class="a" style="left:1133.2px;top:415.3px;width:78px;height:28.5px;border-radius:14.5px;background:#213c33"></div>
<svg style="left:1145.50px;top:422.90px" width="13.90" height="13.90" viewBox="0 0 13.90 13.90"><g fill="none" stroke="#1de27f" stroke-width="1.3" stroke-linecap="round"><circle cx="6.95" cy="6.95" r="5.3"/><path d="M6.95 1.65A6.62 6.62 0 0 1 1.65 6.95"/><path d="M12.25 6.95A6.62 6.62 0 0 0 6.95 12.25"/></g></svg>
<div class="t" style="left:1164.0px;top:423.20px;font-size:13px;font-weight:bold;letter-spacing:-0.3px">Padel</div>
<svg style="left:1332.2px;top:420px" width="20" height="18" viewBox="0 0 20 18"><g fill="none" stroke="#1de27f" stroke-width="1.9" stroke-linecap="round" stroke-linejoin="round"><path d="M3.8 8.9H14.4M8.8 3.6L14.4 8.9L8.8 14.2"/></g></svg>
<div class="a" style="left:1384.6px;top:332px;width:252px;height:126px;border-radius:16px;background:#2e3038"></div>
<div class="t" style="left:1399.6px;top:349.60px;font-size:15px;font-weight:bold;letter-spacing:-0.5px">1 - Padel</div>
<div class="t" style="right:281.4000000000001px;top:351.37px;font-size:13.5px;color:#a9aeb7;-webkit-text-stroke:0.2px #a9aeb7;letter-spacing:-0.3px">Starts in 20 minutes</div>
<svg style="left:1399.1999999999998px;top:380.8px" width="20.8" height="20.8" viewBox="0 0 21 21"><defs><clipPath id="cp6"><circle cx="10.5" cy="10.5" r="10.5"/></clipPath><filter id="bl6" x="-10%" y="-10%" width="120%" height="120%"><feGaussianBlur stdDeviation="0.5"/></filter></defs><g clip-path="url(#cp6)"><g filter="url(#bl6)"><rect width="21" height="21" fill="#c9a680"/>
<path d="M5 0 H17 L16 4 Q11 6 6 5Z" fill="#3a2c1e"/><rect x="12.5" y="2.5" width="1.2" height="3" fill="#b08a50"/>
<path d="M5.5 8 Q7 6.5 9.5 7.2 L10.5 12 Q9 14.5 6.5 14 L5 11Z" fill="#151515"/><path d="M5 8.5 L6 8 L6.2 13 L5.2 12Z" fill="#7d8fa0"/>
<circle cx="8" cy="6" r="1.2" fill="#e3b380"/><rect x="10.5" y="7.2" width="1.3" height="1.8" fill="#e6e6e6"/>
<rect x="8" y="15" width="9" height="1.4" fill="#5d5a4a"/><rect x="13" y="9" width="7" height="5" fill="#bf9b76"/></g></g></svg>
<div class="t" style="left:1428.1px;top:385.89px;font-size:11px;color:#eeeef0;letter-spacing:-0.1px;-webkit-text-stroke:0.2px #eeeef0">Antero Porilainen</div>
<div class="a" style="left:1399.6px;top:415.3px;width:78px;height:28.5px;border-radius:14.5px;background:#213c33"></div>
<svg style="left:1411.90px;top:422.90px" width="13.90" height="13.90" viewBox="0 0 13.90 13.90"><g fill="none" stroke="#1de27f" stroke-width="1.3" stroke-linecap="round"><circle cx="6.95" cy="6.95" r="5.3"/><path d="M6.95 1.65A6.62 6.62 0 0 1 1.65 6.95"/><path d="M12.25 6.95A6.62 6.62 0 0 0 6.95 12.25"/></g></svg>
<div class="t" style="left:1430.3999999999999px;top:423.20px;font-size:13px;font-weight:bold;letter-spacing:-0.3px">Padel</div>
<svg style="left:1598.6px;top:420px" width="20" height="18" viewBox="0 0 20 18"><g fill="none" stroke="#1de27f" stroke-width="1.9" stroke-linecap="round" stroke-linejoin="round"><path d="M3.8 8.9H14.4M8.8 3.6L14.4 8.9L8.8 14.2"/></g></svg>
<div class="a" style="left:319px;top:545px;width:252px;height:126px;border-radius:16px;background:#2e3038"></div>
<div class="t" style="left:334px;top:562.60px;font-size:15px;font-weight:bold;letter-spacing:-0.5px">1 - Gym</div>
<div class="t" style="right:1347px;top:564.37px;font-size:13.5px;color:#2fd27a;-webkit-text-stroke:0.2px #2fd27a;letter-spacing:-0.5px">Ends in 1 hour</div>
<svg style="left:333.6px;top:593.8px" width="20.8" height="20.8" viewBox="0 0 21 21"><defs><clipPath id="cp7"><circle cx="10.5" cy="10.5" r="10.5"/></clipPath><filter id="bl7" x="-10%" y="-10%" width="120%" height="120%"><feGaussianBlur stdDeviation="0.5"/></filter></defs><g clip-path="url(#cp7)"><g filter="url(#bl7)"><rect width="21" height="21" fill="#1e4eae"/>
<rect x="0" y="0" width="21" height="5" fill="#111"/><rect x="17" y="3" width="3" height="3" fill="#8a3020"/>
<path d="M0 10 L10 14 L13 21 H0Z" fill="#d6dce6"/><path d="M12 18 L21 16 V21 H12Z" fill="#c7d0e0"/>
<rect x="9" y="6" width="4.5" height="6.5" rx="1.5" fill="#c49575"/><circle cx="11.2" cy="5.5" r="1.3" fill="#b08060"/>
<rect x="8" y="7" width="1.2" height="5" fill="#b58868"/><rect x="13.5" y="7" width="1.2" height="6" fill="#b58868"/>
<rect x="9.5" y="12.5" width="4" height="3.5" fill="#121212"/>
<rect x="10" y="16" width="1.3" height="5" fill="#c09070"/><rect x="12.2" y="16" width="1.3" height="5" fill="#c09070"/></g></g></svg>
<div class="t" style="left:362.5px;top:598.89px;font-size:11px;color:#eeeef0;letter-spacing:-0.1px;-webkit-text-stroke:0.2px #eeeef0">Hugo Hutri</div>
<div class="a" style="left:334px;top:628.3px;width:72px;height:28.5px;border-radius:14.5px;background:#213c33"></div>
<svg style="left:346.30px;top:635.90px" width="13.90" height="13.90" viewBox="0 0 13.90 13.90"><g fill="none" stroke="#1de27f" stroke-width="1.3" stroke-linecap="round"><circle cx="6.95" cy="6.95" r="5.3"/><path d="M6.95 1.65A6.62 6.62 0 0 1 1.65 6.95"/><path d="M12.25 6.95A6.62 6.62 0 0 0 6.95 12.25"/></g></svg>
<div class="t" style="left:364.8px;top:636.20px;font-size:13px;font-weight:bold;letter-spacing:-0.3px">Gym</div>
<svg style="left:533px;top:633px" width="20" height="18" viewBox="0 0 20 18"><g fill="none" stroke="#1de27f" stroke-width="1.9" stroke-linecap="round" stroke-linejoin="round"><path d="M3.8 8.9H14.4M8.8 3.6L14.4 8.9L8.8 14.2"/></g></svg>
<div class="a" style="left:585.6px;top:545px;width:252px;height:126px;border-radius:16px;background:#2e3038"></div>
<div class="t" style="left:600.6px;top:562.60px;font-size:15px;font-weight:bold;letter-spacing:-0.5px">1 - Golf simulator</div>
<div class="t" style="right:1080.4px;top:564.37px;font-size:13.5px;color:#2fd27a;-webkit-text-stroke:0.2px #2fd27a;letter-spacing:-0.5px">Ends in 3 hours</div>
<svg style="left:600.2px;top:593.8px" width="20.8" height="20.8" viewBox="0 0 45 45"><defs><clipPath id="cp8"><circle cx="22.5" cy="22.5" r="22.5"/></clipPath><filter id="bl8" x="-10%" y="-10%" width="120%" height="120%"><feGaussianBlur stdDeviation="1.1"/></filter></defs><g clip-path="url(#cp8)"><g filter="url(#bl8)"><rect width="45" height="45" fill="#587d8e"/>
<rect x="0" y="0" width="45" height="12" fill="#6d95a8"/><rect x="30" y="4" width="15" height="16" fill="#8fb4c6"/>
<rect x="0" y="24" width="45" height="9" fill="#46504c"/>
<path d="M5 0 H8 L9 33 H6Z" fill="#4a3d34"/><path d="M11 0 H14.5 L14 33 H11Z" fill="#3d322b"/><rect x="17" y="0" width="1.5" height="30" fill="#5b4c42"/>
<rect x="21" y="0" width="2.2" height="30" fill="#463a32"/><rect x="26" y="0" width="1.5" height="26" fill="#5d4e44"/>
<path d="M33 0 H35.5 L36 30 H34Z" fill="#473a31"/><rect x="39" y="6" width="1.8" height="26" fill="#52443a"/><rect x="43" y="10" width="2" height="22" fill="#4a3d34"/>
<rect x="0" y="31" width="45" height="4" fill="#2c2b26"/>
<path d="M0 35 H45 V45 H0Z" fill="#858684"/><path d="M0 37 L11 35.5 L13 45 H0Z" fill="#50585a"/><path d="M30 38 L45 36 V45 H32Z" fill="#9a9b98"/>
<circle cx="29.5" cy="16.5" r="2.6" fill="#b99a7d"/><rect x="27" y="13.2" width="5" height="2" fill="#5e4436"/>
<path d="M25 21 L33 20 L40 26 L39 34 L26 34Z" fill="#17302c"/>
<rect x="28" y="21" width="4.5" height="12" fill="#878988"/>
<path d="M25 32 L16 44 L19 45 L28 34Z" fill="#bba794"/><path d="M30 33 L24 45 L27 45 L33 34Z" fill="#b39f8b"/>
<rect x="12" y="42" width="5" height="3" fill="#2b4a60"/></g></g></svg>
<div class="t" style="left:629.1px;top:598.89px;font-size:11px;color:#eeeef0;letter-spacing:-0.1px;-webkit-text-stroke:0.2px #eeeef0">Jarmo Pelaaja</div>
<div class="a" style="left:600.6px;top:628.3px;width:129px;height:28.5px;border-radius:14.5px;background:#213c33"></div>
<svg style="left:612.90px;top:635.90px" width="13.90" height="13.90" viewBox="0 0 13.90 13.90"><g fill="none" stroke="#1de27f" stroke-width="1.3" stroke-linecap="round"><circle cx="6.95" cy="6.95" r="5.3"/><path d="M6.95 1.65A6.62 6.62 0 0 1 1.65 6.95"/><path d="M12.25 6.95A6.62 6.62 0 0 0 6.95 12.25"/></g></svg>
<div class="t" style="left:631.4px;top:636.20px;font-size:13px;font-weight:bold;letter-spacing:-0.3px">Golf simulator</div>
<svg style="left:799.6px;top:633px" width="20" height="18" viewBox="0 0 20 18"><g fill="none" stroke="#1de27f" stroke-width="1.9" stroke-linecap="round" stroke-linejoin="round"><path d="M3.8 8.9H14.4M8.8 3.6L14.4 8.9L8.8 14.2"/></g></svg>
<div class="a" style="left:0px;top:0px;width:18px;height:18px;background:radial-gradient(circle at 18px 18px,transparent 17.4px,#13151a 18px)"></div>
<svg style="left:0px;top:0px" width="18" height="18" viewBox="0 0 18 18"><path d="M0.4 18A17.6 17.6 0 0 1 18 0.4" fill="none" stroke="#5a5650" stroke-width="0.9" stroke-dasharray="0.9 3.2" opacity="0.6"/></svg>
<div class="a" style="left:1886px;top:0px;width:18px;height:18px;background:radial-gradient(circle at 0px 18px,transparent 17.4px,#13151a 18px)"></div>
<svg style="left:1886px;top:0px" width="18" height="18" viewBox="0 0 18 18"><path d="M0 0.4A17.6 17.6 0 0 1 17.6 18" fill="none" stroke="#5a5650" stroke-width="0.9" stroke-dasharray="0.9 3.2" opacity="0.6"/></svg>
<div class="a" style="left:0px;top:862px;width:18px;height:18px;background:radial-gradient(circle at 18px 0px,transparent 17.4px,#13151a 18px)"></div>
<svg style="left:0px;top:862px" width="18" height="18" viewBox="0 0 18 18"><path d="M0.4 0A17.6 17.6 0 0 0 18 17.6" fill="none" stroke="#5a5650" stroke-width="0.9" stroke-dasharray="0.9 3.2" opacity="0.6"/></svg>
<div class="a" style="left:1886px;top:862px;width:18px;height:18px;background:radial-gradient(circle at 0px 0px,transparent 17.4px,#13151a 18px)"></div>
<svg style="left:1886px;top:862px" width="18" height="18" viewBox="0 0 18 18"><path d="M0 17.6A17.6 17.6 0 0 0 17.6 0" fill="none" stroke="#5a5650" stroke-width="0.9" stroke-dasharray="0.9 3.2" opacity="0.6"/></svg>
</body></html>
